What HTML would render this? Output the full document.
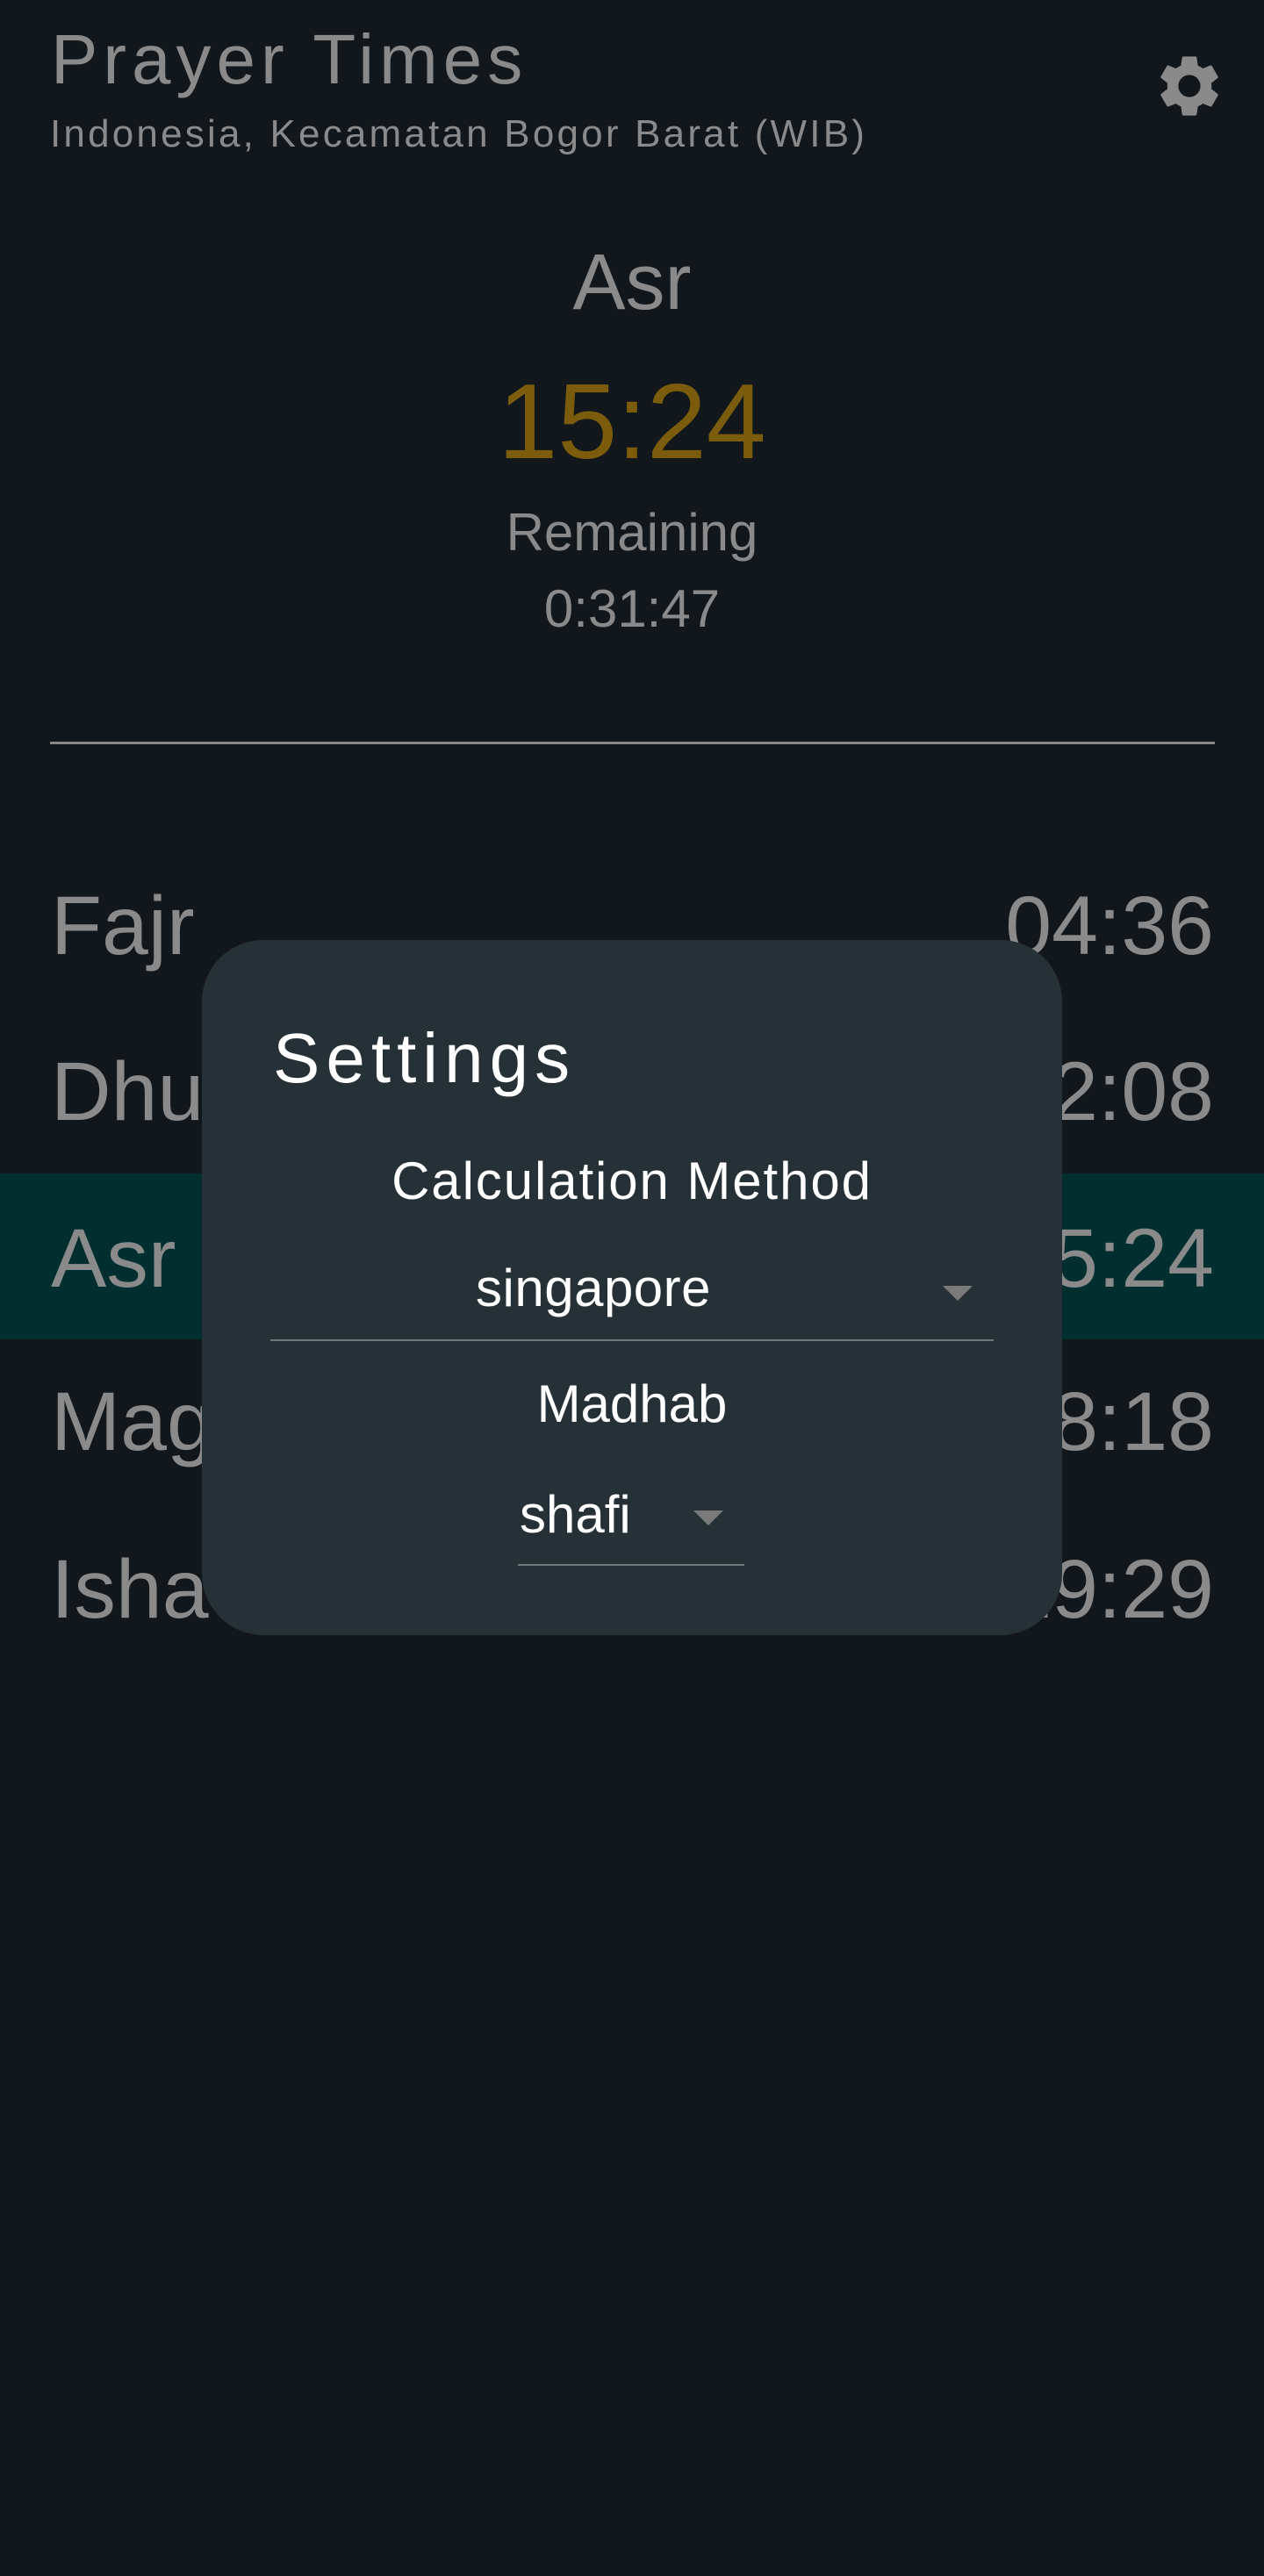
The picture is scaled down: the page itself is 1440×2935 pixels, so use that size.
<!DOCTYPE html>
<html><head><meta charset="utf-8"><style>
html,body{margin:0;padding:0;background:#12171b;}
body{width:1440px;height:2935px;position:relative;overflow:hidden;font-family:"Liberation Sans",sans-serif;}
.t{position:absolute;line-height:1;white-space:nowrap;}
.c{left:0;width:1440px;text-align:center;}
.row{position:absolute;left:0;width:1440px;height:189px;}
.nm{position:absolute;left:58px;font-size:95px;color:#8a8a8a;line-height:1;}
.tm{position:absolute;right:57px;font-size:95px;color:#8a8a8a;line-height:1;}
</style></head><body>
<div class="t" style="left:58px;top:28px;font-size:80px;color:#8a8a8a;letter-spacing:6px;">Prayer Times</div>
<div class="t" style="left:57px;top:131px;font-size:44px;color:#8a8a8a;letter-spacing:3.2px;">Indonesia, Kecamatan Bogor Barat (WIB)</div>
<svg style="position:absolute;left:1313px;top:56px" width="84" height="84" viewBox="0 0 24 24"><path fill="#8a8a8a" d="M19.14 12.94c.04-.3.06-.61.06-.94 0-.32-.02-.64-.07-.94l2.030-1.58a.49.49 0 0 0 .12-.61l-1.92-3.32a.488.488 0 0 0-.59-.22l-2.39.96c-.5-.38-1.03-.7-1.62-.94l-.36-2.54a.484.484 0 0 0-.48-.41h-3.840c-.24 0-.43.17-.47.41l-.36 2.54c-.59.24-1.13.57-1.62.94l-2.39-.96c-.22-.08-.47 0-.59.22L2.74 8.87c-.12.21-.08.47.12.61l2.03 1.58c-.05.3-.09.63-.09.94s.02.64.07.94l-2.03 1.58a.49.49 0 0 0-.12.61l1.92 3.32c.12.22.37.29.59.22l2.39-.96c.5.38 1.03.7 1.62.94l.36 2.54c.05.24.24.41.48.41h3.84c.24 0 .44-.17.47-.41l.36-2.54c.59-.24 1.13-.56 1.62-.94l2.39.96c.22.08.47 0 .59-.22l1.92-3.32c.12-.22.07-.47-.12-.61l-2.010-1.58zM12 15.6c-1.98 0-3.6-1.62-3.6-3.6s1.62-3.6 3.6-3.6 3.6 1.62 3.6 3.6-1.62 3.6-3.6 3.6z"/></svg>

<div class="t c" style="top:277px;font-size:90px;color:#8a8a8a;">Asr</div>
<div class="t c" style="top:419px;font-size:122px;color:#7a5c0c;">15:24</div>
<div class="t c" style="top:577px;font-size:60px;color:#8a8a8a;">Remaining</div>
<div class="t c" style="top:664px;font-size:60px;color:#8a8a8a;">0:31:47</div>
<div style="position:absolute;left:57px;top:845px;width:1327px;height:3px;background:#888;"></div>

<div class="row" style="top:1008px;"><div class="nm" style="top:0">Fajr</div><div class="tm" style="top:0">04:36</div></div>
<div class="row" style="top:1197px;"><div class="nm" style="top:0">Dhuhr</div><div class="tm" style="top:0">12:08</div></div>
<div style="position:absolute;left:0;top:1337px;width:1440px;height:189px;background:#012f2f;"></div>
<div class="row" style="top:1387px;"><div class="nm" style="top:0">Asr</div><div class="tm" style="top:0">15:24</div></div>
<div class="row" style="top:1573px;"><div class="nm" style="top:0">Maghrib</div><div class="tm" style="top:0">18:18</div></div>
<div class="row" style="top:1764px;"><div class="nm" style="top:0">Isha</div><div class="tm" style="top:0">19:29</div></div>

<div style="position:absolute;left:230px;top:1071px;width:980px;height:792px;background:#263137;border-radius:70px;"></div>
<div class="t" style="left:311px;top:1166px;font-size:80px;color:#fff;letter-spacing:7px;">Settings</div>
<div class="t c" style="top:1316px;font-size:60px;color:#fff;letter-spacing:1.9px;">Calculation Method</div>
<div class="t" style="left:542px;top:1438px;font-size:60px;color:#fff;letter-spacing:0.5px;">singapore</div>
<svg style="position:absolute;left:1074px;top:1465px" width="34" height="18"><polygon points="0,0 34,0 17,17" fill="#7a7a7a"/></svg>
<div style="position:absolute;left:308px;top:1526px;width:824px;height:2px;background:#6f777b;"></div>
<div class="t c" style="top:1570px;font-size:60px;color:#fff;">Madhab</div>
<div class="t" style="left:592px;top:1696px;font-size:60px;color:#fff;">shafi</div>
<svg style="position:absolute;left:790px;top:1721px" width="34" height="18"><polygon points="0,0 34,0 17,17" fill="#7a7a7a"/></svg>
<div style="position:absolute;left:590px;top:1782px;width:258px;height:2px;background:#6f777b;"></div>
</body></html>
